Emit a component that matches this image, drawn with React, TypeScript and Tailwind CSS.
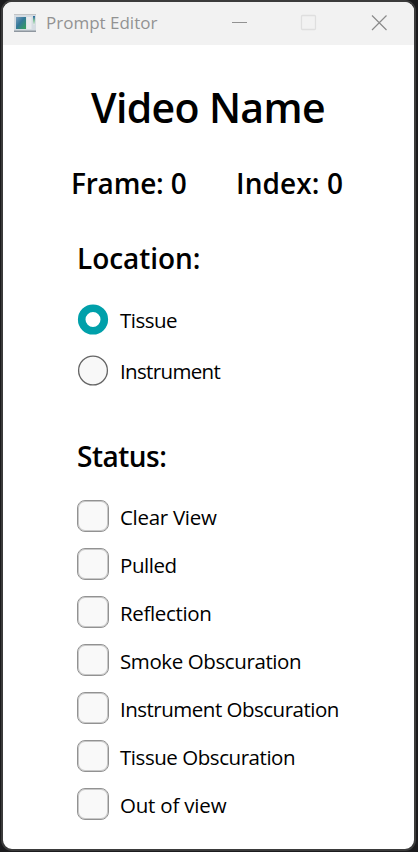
const locations = [
  { label: 'Tissue', spacing: 'tracking-[-0.5px]', selected: true },
  { label: 'Instrument', spacing: 'tracking-[-0.65px]', selected: false },
];

const statuses = [
  { label: 'Clear View', spacing: 'tracking-[-0.3px]' },
  { label: 'Pulled', spacing: 'tracking-[-0.45px]' },
  { label: 'Reflection', spacing: 'tracking-[-0.35px]' },
  { label: 'Smoke Obscuration', spacing: 'tracking-[-0.4px]' },
  { label: 'Instrument Obscuration', spacing: 'tracking-[-0.5px]' },
  { label: 'Tissue Obscuration', spacing: 'tracking-[-0.45px]' },
  { label: 'Out of view', spacing: 'tracking-[-0.2px]' },
];

function AppIcon() {
  return (
    <svg width="24" height="20" viewBox="0 0 24 20" className="relative -top-px shrink-0">
      <defs>
        <linearGradient id="screen" x1="0" y1="0" x2="1" y2="1">
          <stop offset="0" stopColor="#7c9fbd" />
          <stop offset="0.45" stopColor="#34789a" />
          <stop offset="1" stopColor="#35a257" />
        </linearGradient>
        <linearGradient id="side" x1="0" y1="0" x2="0" y2="1">
          <stop offset="0" stopColor="#2864a2" />
          <stop offset="0.5" stopColor="#83c39b" />
          <stop offset="1" stopColor="#e5e8ea" />
        </linearGradient>
      </defs>
      <rect x="1" y="1" width="22" height="18" fill="#d5dce2" />
      <rect x="1" y="1" width="22" height="1" fill="#c2c4c6" />
      <rect x="1" y="17.5" width="22" height="1.5" fill="#8f979f" />
      <rect x="3" y="4" width="10" height="12" fill="url(#screen)" />
      <rect x="13.5" y="4" width="5" height="12" fill="#e8ebed" />
      <rect x="20" y="3" width="2" height="9" fill="url(#side)" />
    </svg>
  );
}

export default function App() {
  return (
    <div className="h-[852px] w-[418px] overflow-hidden bg-[#1b1b1d] pl-px font-['Open_Sans','Noto_Sans',sans-serif] text-black">
      <div className="flex h-[851px] w-[415px] flex-col overflow-hidden rounded-[11px] border-2 border-[#3b3b3b] bg-white">
        <header className="flex h-[43px] shrink-0 items-center bg-[#f2f2f2] pl-[10px] text-[#929292]">
          <AppIcon />
          <span className="relative -top-px ml-[9px] w-[184px] whitespace-nowrap text-[17px] leading-[24px]">Prompt Editor</span>
          <svg width="160" height="18" viewBox="0 0 160 18" fill="none" className="relative -top-px shrink-0">
            <path d="M2 8.5h15" stroke="#929292" />
            <rect x="71.5" y="1.5" width="14" height="14" rx="1" stroke="#dfdfdf" strokeWidth="1.3" />
            <path d="m142 1.500 14.500 14.500M156.500 1.500 142 16" stroke="#8b8b8b" strokeWidth="1.2" />
          </svg>
        </header>
        <main className="flex flex-col">
          <h1 className="mt-[32px] ml-[88px] h-[60px] whitespace-nowrap text-[41px] leading-[60px] font-semibold tracking-[-0.65px]">Video Name</h1>
          <div className="mt-[26px] flex h-[40px] whitespace-nowrap text-[28px] leading-[40px] font-semibold">
            <span className="ml-[68px] w-[165px] tracking-[-0.2px]">Frame: 0</span>
            <span className="tracking-[0.1px]">Index: 0</span>
          </div>
          <h2 className="mt-[35px] ml-[74px] h-[40px] text-[28px] leading-[40px] font-semibold tracking-[-0.05px]">Location:</h2>
          <div className="mt-[15px] ml-[75px] flex flex-col">
            {locations.map((item) => (
              <label key={item.label} className="flex h-[51px] items-center">
                <svg width="32" height="32" viewBox="0 0 32 32" className="-ml-px shrink-0">
                  {item.selected ? (
                    <circle cx="16" cy="16.5" r="11.300" fill="#fff" stroke="#00a0aa" strokeWidth="7.600" />
                  ) : (
                    <circle cx="16" cy="16.500" r="14.400" fill="#f8f8f8" stroke="#646464" strokeWidth="1.300" />
                  )}
                </svg>
                <span className={`ml-[11px] pt-[3px] whitespace-nowrap text-[20.5px] leading-[30px] ${item.spacing}`}>{item.label}</span>
              </label>
            ))}
          </div>
          <h2 className="mt-[41px] ml-[74px] h-[40px] text-[28px] leading-[40px] font-semibold tracking-[-0.5px]">Status:</h2>
          <div className="mt-[16px] ml-[74px] flex flex-col">
            {statuses.map((item) => (
              <label key={item.label} className="flex h-[48px] items-center">
                <span className="size-[32px] shrink-0 rounded-[8px] border border-[#929292] bg-[#f9f9f9] shadow-[inset_0_0_0_1px_#c8c8c8]" />
                <span className={`ml-[11px] pt-[2px] whitespace-nowrap text-[20.5px] leading-[30px] ${item.spacing}`}>{item.label}</span>
              </label>
            ))}
          </div>
        </main>
      </div>
    </div>
  );
}
